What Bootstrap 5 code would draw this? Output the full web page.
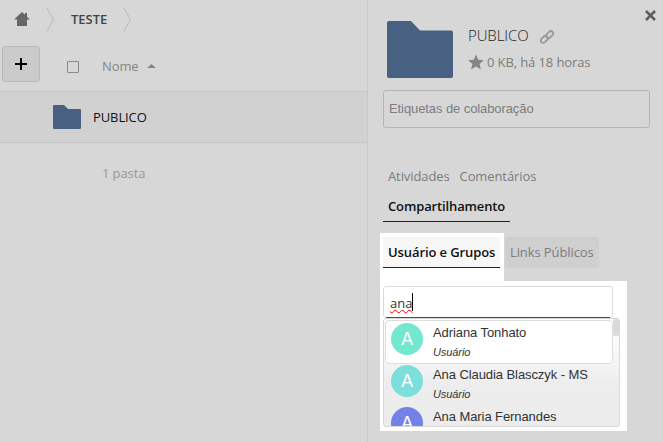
<!DOCTYPE html>
<html lang="pt-BR">
<head>
<meta charset="utf-8">
<meta name="viewport" content="width=device-width, initial-scale=1">
<title>Arquivos</title>
<link href="https://cdn.jsdelivr.net/npm/bootstrap@5.3.0/dist/css/bootstrap.min.css" rel="stylesheet">
<style>
html,body{height:100%;overflow:hidden}
body{font:13px/20px "Open Sans",sans-serif;background:#d7d7d7;color:#111}
svg{display:block;flex:none}
.files{width:368px;border-right:1px solid #c9c9c9}
.crumbs{height:39px;padding:0 0 1px 14px}
.crumb-now{font-weight:600;color:#444;margin:0 16px 0 17px}
.tools{height:52px;padding:7px 0 0 2px}
.btn-new{width:38px;height:36px;background:#cbcbcb;border:1px solid #b9b9b9;border-radius:3px}
.pick{width:12px;height:12px;border:1px solid #8a8a8a;border-radius:1px;margin:1px 23px 0 27px}
.head{height:40px;color:#858585;letter-spacing:-.1px}
.file-row{height:52px;background:#d1d1d1;border:solid #c5c5c5;border-width:1px 0;padding-left:53px;letter-spacing:-.1px}
.summary{padding:20px 0 0 102px;color:#999;letter-spacing:-.1px}
.details{width:295px;padding:21px 13px 0 15px}
.info{height:69px;padding-left:4px}
.info-text{padding-left:15px;margin-top:4px}
.name{font-size:15px;line-height:20px;color:#222;letter-spacing:-.1px}
.name-light{font-weight:300}
.chain{margin:3px 0 0 11px}
.meta{color:#7c7c7c;margin-top:7px;letter-spacing:-.11px}
.star{margin-right:3px}
.x-btn{position:absolute;right:7px;top:10px}
.tags{height:38px;border:1px solid #b5b5b5;border-radius:3px;padding:0 0 1px 5px;font-family:"Liberation Sans",Arial,sans-serif;color:#7d7d7d;letter-spacing:-.09px}
.tabs{margin-top:38px;color:#7c7c7c;letter-spacing:-.1px}
.tab-a{padding:0 5px;height:30px}
.tab-on{height:26px;padding:0 5px;width:127px;font-weight:600;color:#111;border-bottom:1px solid #222;letter-spacing:-.13px}
.subtabs{margin-top:11px}
.lit{background:#fff;margin-left:-3px}
.lit-tab{width:124px;height:48px;padding:4px 4px 0 3px}
.sub{height:31px;line-height:30px;padding:0 5px}
.sub-on{background:#f7f7f7;font-weight:600;color:#111;border-bottom:1px solid #222;letter-spacing:-.1px}
.sub-off{background:#cfcfcf;color:#7c7c7c;width:94px;margin:4px 0 0 1px;white-space:nowrap;letter-spacing:-.1px}
.lit-form{width:247px;height:150px;padding:5px 0 0 3px}
.search{width:230px;height:32px;border:1px solid #ddd;border-radius:3px;padding:0 2px}
.search-line{border-bottom:1px solid red;height:31px;padding:6px 0 0 4px;color:#333}
.typed{text-decoration:underline wavy red 1px;text-underline-offset:1px;text-decoration-skip-ink:none}
.caret{width:1px;height:18px;background:#000}
.results{width:237px;height:109px;border:1px solid #d8d8d8;border-radius:3px;background:linear-gradient(#fff 0,#fafafa 25%,#ededed 60%,#ececec 100%);overflow:hidden;padding:1px 0 1px 1px;font-family:"Liberation Sans",Arial,sans-serif;color:#333;letter-spacing:-.08px}
.people{width:228px}
.person{height:42px;padding:3px 0 0 6px;gap:10px}
.person-on{height:44px;margin-bottom:-2px;background:#fff;border:1px solid #ddd;border-radius:4px;padding:2px 0 0 5px}
.face{width:32px;height:32px;border-radius:50%;color:#fff;font-size:17.6px;line-height:33px;text-align:center;flex:none}
.f1{background:#74e8ce}.f2{background:#7cdfdb}.f3{background:#7481e8}
.who{line-height:18px;white-space:nowrap;padding-top:1px}
.kind{font-size:11px;font-style:italic;line-height:20px}
.thumb{width:6px;height:17px;background:#dadada;border-radius:2px;margin-top:-1px}
</style>
<script src="https://cdn.jsdelivr.net/npm/bootstrap@5.3.0/dist/js/bootstrap.bundle.min.js"></script>
</head>
<body class="d-flex">
<main class="files flex-shrink-0">
  <nav class="crumbs d-flex align-items-center">
    <svg width="16" height="14" viewBox="0 0 16 14"><path fill="#666" d="M8 0 0 7.500h3V14h10V7.500h3L13 4.700V1h-2v1.800z"/></svg>
    <svg class="ms-3" width="8" height="25" viewBox="0 0 8 25"><path fill="none" stroke="#b9b9b9" d="M.5.5l7 12-7 12"/></svg>
    <span class="crumb-now">TESTE</span>
    <svg width="8" height="25" viewBox="0 0 8 25"><path fill="none" stroke="#b9b9b9" d="M.5.5l7 12-7 12"/></svg>
  </nav>
  <div class="tools d-flex">
    <div class="btn-new d-flex align-items-center justify-content-center"><svg width="12" height="12"><path d="M5 0h2v5h5v2H7v5H5V7H0V5h5z"/></svg></div>
    <div class="head d-flex align-items-center"><span class="pick"></span>Nome<svg class="ms-2" width="9" height="4"><path fill="#858585" d="M0 4 4.500 0 9 4z"/></svg></div>
  </div>
  <div class="file-row d-flex align-items-center">
    <svg width="28" height="24" viewBox="0 0 28 24"><path fill="#486082" d="M1 0h10l4 4h12q1 0 1 1v18q0 1-1 1H1q-1 0-1-1V1q0-1 1-1z"/></svg>
    <span class="ms-2 ps-1">PUBLICO</span>
  </div>
  <div class="summary">1 pasta</div>
</main>
<aside class="details position-relative flex-shrink-0">
  <svg class="x-btn" width="11" height="11" viewBox="0 0 11 11"><path stroke="#5d5d5d" stroke-width="2.500" d="M1 1l9 9M10 1l-9 9"/></svg>
  <div class="info d-flex">
    <svg width="66" height="57" viewBox="0 0 66 57"><path fill="#486082" d="M2 0h22l9 9.500h31q2 0 2 2V55q0 2-2 2H2q-2 0-2-2V2q0-2 2-2z"/></svg>
    <div class="info-text text-nowrap">
      <div class="name d-flex align-items-center"><span class="name-light">PUBLICO</span>
        <svg class="chain" width="14" height="14" viewBox="0 0 14 14" fill="none" stroke="#999" stroke-width="1.800"><rect x="5.700" y="2.200" width="8" height="4.800" rx="2.400" transform="rotate(-45 9.700 4.600)"/><rect x=".3" y="7" width="8" height="4.800" rx="2.400" transform="rotate(-45 4.300 9.400)"/></svg></div>
      <div class="meta d-flex align-items-center"><svg class="star" width="16" height="16" viewBox="0 0 16 16"><path fill="#858585" d="M8 .5l2.200 5.200 5.600.5-4.200 3.700 1.300 5.600L8 12.500l-4.900 3 1.300-5.600L.2 6.200l5.600-.5z"/></svg>0 KB, há 18 horas</div>
    </div>
  </div>
  <div class="tags d-flex align-items-center">Etiquetas de colaboração</div>
  <div class="tabs">
    <div class="d-flex"><span class="tab-a">Atividades</span><span class="tab-a">Comentários</span></div>
    <div class="tab-on">Compartilhamento</div>
  </div>
  <div class="subtabs d-flex">
    <div class="lit lit-tab text-nowrap"><div class="sub sub-on">Usuário e Grupos</div></div>
    <div class="sub sub-off">Links Públicos</div>
  </div>
  <div class="lit lit-form">
    <div class="search"><div class="search-line d-flex"><span class="typed">ana</span><span class="caret"></span></div></div>
    <div class="results d-flex justify-content-between">
      <div class="people">
        <div class="person person-on d-flex"><div class="face f1">A</div><div class="who">Adriana Tonhato<div class="kind">Usuário</div></div></div>
        <div class="person d-flex"><div class="face f2">A</div><div class="who">Ana Claudia Blasczyk - MS<div class="kind">Usuário</div></div></div>
        <div class="person d-flex"><div class="face f3">A</div><div class="who">Ana Maria Fernandes</div></div>
      </div>
      <div class="thumb"></div>
    </div>
  </div>
</aside>
</body>
</html>
